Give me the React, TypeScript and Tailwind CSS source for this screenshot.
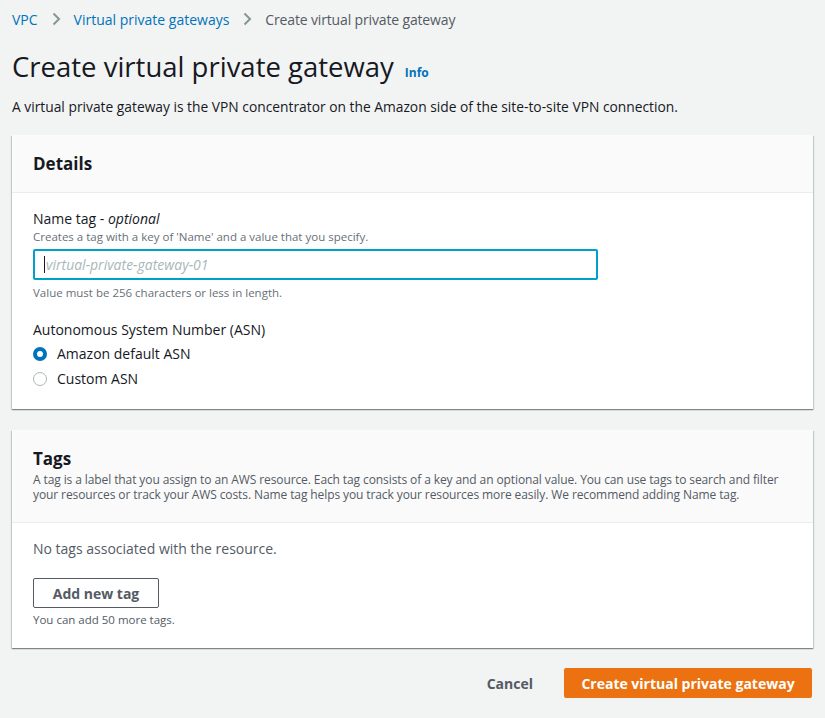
import React from "react";

function Chevron() {
  return (
    <svg width="16" height="16" viewBox="0 0 16 16" className="mx-[10px] text-[#879596]">
      <path d="M5.5 2.5 11 8l-5.5 5.5" fill="none" stroke="currentColor" strokeWidth="2" />
    </svg>
  );
}

function Radio({ checked, label }: { checked?: boolean; label: string }) {
  return (
    <label className="flex items-center h-[25px] text-[14px] text-[#16191f]">
      {checked ? (
        <span className="w-[14px] h-[14px] rounded-full bg-[#0073bb] flex items-center justify-center">
          <span className="w-[6px] h-[6px] rounded-full bg-white" />
        </span>
      ) : (
        <span className="w-[14px] h-[14px] rounded-full border border-[#aab7b8] bg-white" />
      )}
      <span className="ml-[10px]">{label}</span>
    </label>
  );
}

const cardShadow =
  "shadow-[0_1px_1px_0_rgba(0,28,36,0.3),1px_1px_1px_0_rgba(0,28,36,0.15),-1px_1px_1px_0_rgba(0,28,36,0.15)]";

export default function App() {
  return (
    <div
      className="min-h-[718px] bg-[#f2f3f3] px-[12px] text-[#16191f]"
      style={{ fontFamily: '"Open Sans", "Liberation Sans", Arial, sans-serif' }}
    >
      <nav className="flex items-center h-[38px] text-[14px]">
        <span className="text-[#0073bb]">VPC</span>
        <Chevron />
        <span className="text-[#0073bb]">Virtual private gateways</span>
        <Chevron />
        <span className="text-[#545b64] tracking-[-0.15px]">Create virtual private gateway</span>
      </nav>

      <div className="flex items-baseline mt-[9px]">
        <h1 className="text-[27.5px] leading-[40px] font-normal text-[#16191f]">Create virtual private gateway</h1>
        <span className="ml-[11px] text-[12px] font-bold text-[#0073bb]">Info</span>
      </div>
      <p className="mt-[10px] text-[13.8px] leading-[20px]">
        A virtual private gateway is the VPN concentrator on the Amazon side of the site-to-site VPN connection.
      </p>

      <section className={`mt-[18px] bg-white ${cardShadow}`}>
        <div className="h-[58px] bg-[#fafafa] border-b border-[#eaeded] flex items-center px-[21px]">
          <h2 className="text-[17px] font-bold">Details</h2>
        </div>
        <div className="px-[21px] pt-[15px] pb-[18px]">
          <div className="text-[14px] leading-[22px]">
            Name tag - <i>optional</i>
          </div>
          <div className="text-[11.5px] leading-[14px] text-[#687078]">
            Creates a tag with a key of 'Name' and a value that you specify.
          </div>
          <div className="mt-[5px] w-[565px] h-[31px] border-2 border-[#00a1c9] rounded-[2px] flex items-center pl-[9px]">
            <span className="w-px h-[17px] bg-[#16191f]" />
            <span className="ml-px text-[14px] italic text-[#aab7b8]">virtual-private-gateway-01</span>
          </div>
          <div className="mt-[5px] text-[11.5px] leading-[16px] text-[#687078]">
            Value must be 256 characters or less in length.
          </div>

          <div className="mt-[18px] text-[14px] leading-[22px]">Autonomous System Number (ASN)</div>
          <div>
            <Radio checked label="Amazon default ASN" />
            <Radio label="Custom ASN" />
          </div>
        </div>
      </section>

      <section className={`mt-[21px] bg-white ${cardShadow}`}>
        <div className="bg-[#fafafa] border-b border-[#eaeded] px-[21px] pt-[18px] pb-[20px]">
          <h2 className="text-[17px] font-bold leading-[22px]">Tags</h2>
          <p className="mt-[2px] text-[12px] leading-[15px] text-[#545b64] tracking-[-0.1px]">
            A tag is a label that you assign to an AWS resource. Each tag consists of a key and an optional value. You can use
            tags to search and filter your resources or track your AWS costs. Name tag helps you track your resources more
            easily. We recommend adding Name tag.
          </p>
        </div>
        <div className="px-[21px] pt-[15px] pb-[20px]">
          <div className="text-[14px] leading-[22px] text-[#545b64]">No tags associated with the resource.</div>
          <button
            type="button"
            className="mt-[18px] w-[126px] h-[30px] border border-[#545b64] rounded-[2px] text-[14px] font-bold text-[#545b64] bg-white"
          >
            Add new tag
          </button>
          <div className="mt-[4px] text-[11.5px] leading-[16px] text-[#545b64]">You can add 50 more tags.</div>
        </div>
      </section>

      <div className="flex justify-end items-center mt-[20px] pb-[19px] pr-px">
        <button type="button" className="text-[14px] font-bold text-[#545b64] px-[20px] h-[30px]">
          Cancel
        </button>
        <button
          type="button"
          className="ml-[11px] w-[248px] h-[30px] rounded-[2px] bg-[#ec7211] text-white text-[14px] font-bold"
        >
          Create virtual private gateway
        </button>
      </div>
    </div>
  );
}
